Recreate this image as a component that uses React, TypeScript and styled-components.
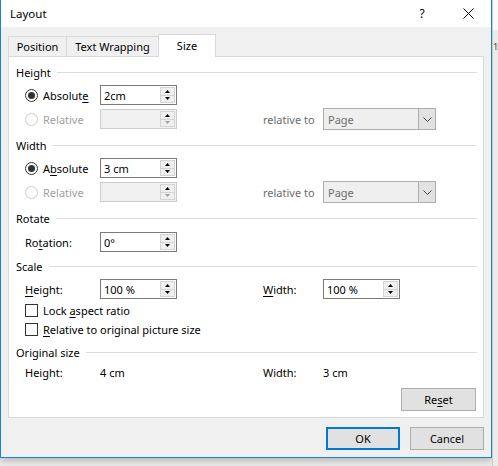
import React from "react";
import styled, { createGlobalStyle } from "styled-components";

const Global = createGlobalStyle`
  html, body { margin: 0; padding: 0; }
  body {
    font-family: "Noto Sans", "Segoe UI", sans-serif;
    font-size: 11px;
    color: #000;
    background: #ececec;
  }
  * { box-sizing: border-box; }
`;

const Page = styled.div`
  width: 498px;
  height: 466px;
  display: flex;
  align-items: flex-start;
  overflow: hidden;
  background: #ececec;
`;

const Win = styled.div`
  width: 492px;
  height: 458px;
  flex: none;
  display: flex;
  flex-direction: column;
  border: 1px solid #1883d7;
  border-top: none;
  background: #f0f0f0;
  box-shadow: 0 3px 7px rgba(0, 0, 0, 0.22);
`;

const SideStrip = styled.div`
  flex: 1;
  height: 466px;
  display: flex;
  flex-direction: column;
  overflow: hidden;
  background: #ebebeb;
  border-left: 1px solid #c9c9c9;
`;

const SideTop = styled.div`
  height: 30px;
  background: #fafafa;
`;

const SideText = styled.span`
  margin-top: 12px;
  font-size: 9px;
  line-height: 10px;
  letter-spacing: -1px;
  color: #444;
  white-space: nowrap;
`;

const TitleBar = styled.div`
  height: 27px;
  flex: none;
  display: flex;
  align-items: center;
  background: #fff;
  padding-left: 9px;
`;

const Title = styled.span`
  flex: 1;
  font-size: 11.5px;
`;

const TitleButton = styled.div`
  width: 46px;
  height: 27px;
  display: flex;
  align-items: center;
  justify-content: center;
  font-size: 12px;
`;

const Body = styled.div`
  flex: 1;
  display: flex;
  flex-direction: column;
  padding: 7px 7px 0 7px;
`;

const TabRow = styled.div`
  height: 23px;
  display: flex;
  align-items: flex-end;
  margin-bottom: -1px;
  position: relative;
  z-index: 1;
`;

const Tab = styled.div<{ $w: number; $active?: boolean }>`
  width: ${(p) => p.$w}px;
  height: ${(p) => (p.$active ? 23 : 20)}px;
  margin-bottom: ${(p) => (p.$active ? 0 : 1)}px;
  margin-left: -1px;
  &:first-child { margin-left: 0; }
  display: flex;
  align-items: center;
  justify-content: center;
  padding-bottom: ${(p) => (p.$active ? 1 : 0)}px;
  background: ${(p) => (p.$active ? "#fff" : "#f0f0f0")};
  border: 1px solid #d9d9d9;
  border-bottom: none;
`;

const Panel = styled.div`
  height: 362px;
  flex: none;
  display: flex;
  flex-direction: column;
  background: #fff;
  border: 1px solid #d9d9d9;
  padding: 7px 6px 0 0;
`;

const GroupHeader = styled.div<{ $mt: number }>`
  height: 16px;
  margin-top: ${(p) => p.$mt}px;
  display: flex;
  align-items: center;
  padding-left: 7px;
  flex: none;
`;

const Rule = styled.div`
  flex: 1;
  height: 1px;
  margin-left: 6px;
  background: #dcdcdc;
`;

const Row = styled.div<{ $mt: number; $h?: number }>`
  height: ${(p) => p.$h ?? 24}px;
  margin-top: ${(p) => p.$mt}px;
  display: flex;
  align-items: center;
  padding-left: 16px;
  flex: none;
`;

const Cell = styled.div<{ $w?: number; $ml?: number; $muted?: boolean }>`
  width: ${(p) => (p.$w ? `${p.$w}px` : "auto")};
  margin-left: ${(p) => p.$ml ?? 0}px;
  flex: none;
  display: flex;
  align-items: center;
  gap: 5px;
  white-space: nowrap;
  color: ${(p) => (p.$muted ? "#6d6d6d" : "#000")};
`;

const Label = styled.span<{ $disabled?: boolean }>`
  color: ${(p) => (p.$disabled ? "#a0a0a0" : "#000")};
  u { text-decoration-thickness: 1px; text-underline-offset: 2px; }
`;

const RadioCircle = styled.span<{ $on?: boolean; $off?: boolean }>`
  width: 13px;
  height: 13px;
  flex: none;
  border-radius: 50%;
  border: 1px solid ${(p) => (p.$off ? "#cccccc" : "#333")};
  background: #fff;
  display: flex;
  align-items: center;
  justify-content: center;
  &::after {
    content: "";
    width: 7px;
    height: 7px;
    border-radius: 50%;
    background: #333;
    display: ${(p) => (p.$on ? "block" : "none")};
  }
`;

const CheckBox = styled.span`
  width: 13px;
  height: 13px;
  flex: none;
  border: 1px solid #333;
  background: #fff;
`;

const SpinField = styled.div<{ $disabled?: boolean }>`
  width: 77px;
  height: 20px;
  flex: none;
  display: flex;
  align-items: stretch;
  border: 1px solid ${(p) => (p.$disabled ? "#cccccc" : "#7a7a7a")};
  background: ${(p) => (p.$disabled ? "#f0f0f0" : "#fff")};
  padding: 1px;
`;

const SpinValue = styled.span`
  flex: 1;
  display: flex;
  align-items: center;
  padding-left: 2px;
`;

const SpinButtons = styled.div`
  width: 15px;
  display: flex;
  flex-direction: column;
  border: 1px solid #d4d4d4;
  background: #efefef;
`;

const SpinButton = styled.div<{ $faded?: boolean }>`
  flex: 1;
  display: flex;
  align-items: center;
  justify-content: center;
  & + & { border-top: 1px solid #d4d4d4; }
  svg { fill: ${(p) => (p.$faded ? "#a0a0a0" : "#000")}; }
`;

const Dropdown = styled.div`
  width: 113px;
  height: 22px;
  flex: none;
  display: flex;
  border: 1px solid #adadad;
  background: #efefef;
  color: #6d6d6d;
`;

const DropValue = styled.span`
  flex: 1;
  display: flex;
  align-items: center;
  padding-left: 4px;
`;

const DropArrow = styled.div`
  width: 17px;
  display: flex;
  align-items: center;
  justify-content: center;
  background: #e2e2e2;
  border-left: 1px solid #adadad;
`;

const ButtonRow = styled.div<{ $mt: number; $pr?: number }>`
  display: flex;
  justify-content: flex-end;
  gap: 10px;
  margin-top: ${(p) => p.$mt}px;
  padding-right: ${(p) => p.$pr ?? 0}px;
  flex: none;
`;

const Button = styled.div<{ $default?: boolean; $w?: number }>`
  width: ${(p) => p.$w ?? 74}px;
  height: 23px;
  display: flex;
  align-items: center;
  justify-content: center;
  background: #e1e1e1;
  border: ${(p) => (p.$default ? "2px solid #0078d7" : "1px solid #adadad")};
  u { text-decoration-thickness: 1px; text-underline-offset: 2px; }
`;

const Up = () => (
  <svg width="5" height="3" viewBox="0 0 5 3">
    <polygon points="0,3 2.5,0 5,3" />
  </svg>
);
const Down = () => (
  <svg width="5" height="3" viewBox="0 0 5 3">
    <polygon points="0,0 5,0 2.5,3" />
  </svg>
);

const Spin: React.FC<{ value?: string; disabled?: boolean }> = ({ value, disabled }) => (
  <SpinField $disabled={disabled}>
    <SpinValue>{value}</SpinValue>
    <SpinButtons>
      <SpinButton>
        <Up />
      </SpinButton>
      <SpinButton $faded={disabled}>
        <Down />
      </SpinButton>
    </SpinButtons>
  </SpinField>
);

const PageSelect = () => (
  <Dropdown>
    <DropValue>Page</DropValue>
    <DropArrow>
      <svg width="9" height="5" viewBox="0 0 9 5">
        <polyline points="0.5,0.5 4.5,4.5 8.5,0.5" fill="none" stroke="#444" strokeWidth="1" />
      </svg>
    </DropArrow>
  </Dropdown>
);

export default function App() {
  return (
    <Page>
      <Global />
      <Win>
        <TitleBar>
          <Title>Layout</Title>
          <TitleButton>?</TitleButton>
          <TitleButton>
            <svg width="11" height="11" viewBox="0 0 11 11">
              <line x1="0.5" y1="0.5" x2="10.5" y2="10.5" stroke="#000" strokeWidth="1" />
              <line x1="10.5" y1="0.5" x2="0.5" y2="10.5" stroke="#000" strokeWidth="1" />
            </svg>
          </TitleButton>
        </TitleBar>
        <Body>
          <TabRow>
            <Tab $w={59}>Position</Tab>
            <Tab $w={93}>Text Wrapping</Tab>
            <Tab $w={58} $active>
              Size
            </Tab>
          </TabRow>
          <Panel>
            <GroupHeader $mt={0}>
              Height
              <Rule />
            </GroupHeader>
            <Row $mt={3}>
              <Cell $w={75}>
                <RadioCircle $on />
                <Label>
                  Absolut<u>e</u>
                </Label>
              </Cell>
              <Spin value="2cm" />
            </Row>
            <Row $mt={0}>
              <Cell $w={75}>
                <RadioCircle $off />
                <Label $disabled>Relative</Label>
              </Cell>
              <Spin disabled />
              <Cell $w={60} $ml={86} $muted>
                relative to
              </Cell>
              <PageSelect />
            </Row>

            <GroupHeader $mt={6}>
              Width
              <Rule />
            </GroupHeader>
            <Row $mt={3}>
              <Cell $w={75}>
                <RadioCircle $on />
                <Label>
                  A<u>b</u>solute
                </Label>
              </Cell>
              <Spin value="3 cm" />
            </Row>
            <Row $mt={0}>
              <Cell $w={75}>
                <RadioCircle $off />
                <Label $disabled>Relative</Label>
              </Cell>
              <Spin disabled />
              <Cell $w={60} $ml={86} $muted>
                relative to
              </Cell>
              <PageSelect />
            </Row>

            <GroupHeader $mt={6}>
              Rotate
              <Rule />
            </GroupHeader>
            <Row $mt={4}>
              <Cell $w={75}>
                <Label>
                  Ro<u>t</u>ation:
                </Label>
              </Cell>
              <Spin value="0°" />
            </Row>

            <GroupHeader $mt={4}>
              Scale
              <Rule />
            </GroupHeader>
            <Row $mt={3}>
              <Cell $w={75}>
                <Label>
                  <u>H</u>eight:
                </Label>
              </Cell>
              <Spin value="100 %" />
              <Cell $w={60} $ml={86}>
                <Label>
                  <u>W</u>idth:
                </Label>
              </Cell>
              <Spin value="100 %" />
            </Row>
            <Row $mt={0} $h={18}>
              <Cell>
                <CheckBox />
                <Label>
                  Lock <u>a</u>spect ratio
                </Label>
              </Cell>
            </Row>
            <Row $mt={1} $h={18}>
              <Cell>
                <CheckBox />
                <Label>
                  <u>R</u>elative to original picture size
                </Label>
              </Cell>
            </Row>

            <GroupHeader $mt={6}>
              Original size
              <Rule />
            </GroupHeader>
            <Row $mt={0}>
              <Cell $w={75}>Height:</Cell>
              <Cell $w={163}>4 cm</Cell>
              <Cell $w={60}>Width:</Cell>
              <Cell>3 cm</Cell>
            </Row>
            <ButtonRow $mt={4} $pr={1}>
              <Button $w={75}>
                <span>
                  Re<u>s</u>et
                </span>
              </Button>
            </ButtonRow>
          </Panel>
          <ButtonRow $mt={9}>
            <Button $default>OK</Button>
            <Button>Cancel</Button>
          </ButtonRow>
        </Body>
      </Win>
      <SideStrip>
        <SideTop />
        <SideText>15</SideText>
      </SideStrip>
    </Page>
  );
}
